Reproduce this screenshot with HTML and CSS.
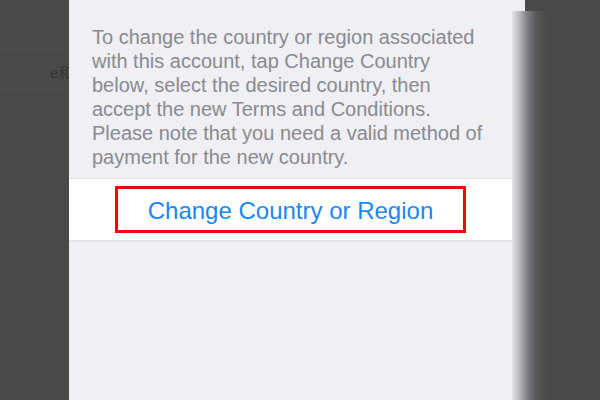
FILE: index.html
```html
<!DOCTYPE html>
<html>
<head>
<meta charset="utf-8">
<link rel="stylesheet" href="styles.css">
</head>
<body>
<div class="screen">
  <div class="backdrop">
    <div class="faint-line l1"></div>
    <div class="ghost">e和</div>
    <div class="faint-line l2"></div>
  </div>
  <div class="panel">
    <p class="note">To change the country or region associated<br>with this account, tap Change Country<br>below, select the desired country, then<br>accept the new Terms and Conditions.<br>Please note that you need a valid method of<br>payment for the new country.</p>
    <div class="band">
      <div class="highlight"><span class="action">Change Country or Region</span></div>
    </div>
  </div>
  <div class="edge-shadow"></div>
</div>
</body>
</html>
```
FILE: styles.css
```css
html, body {
  margin: 0;
  padding: 0;
}
body {
  background: #494949;
  font-family: "Liberation Sans", Arial, sans-serif;
}
.screen {
  position: relative;
  width: 600px;
  height: 400px;
  display: flex;
  overflow: hidden;
}
.backdrop {
  width: 69px;
  flex: none;
  display: flex;
  flex-direction: column;
  align-items: flex-start;
  overflow: hidden;
}
.faint-line {
  width: 69px;
  height: 1px;
  background: #4d4d4d;
}
.l1 { margin-top: 48px; }
.ghost {
  margin-top: 13px;
  margin-left: 50px;
  height: 26px;
  font-family: "Liberation Sans", "Noto Sans CJK SC", sans-serif;
  font-size: 15px;
  line-height: 22px;
  color: #333;
  white-space: nowrap;
}
.panel {
  width: 456px;
  flex: none;
  background: #efeff4;
  display: flex;
  flex-direction: column;
}
.note {
  margin: 0;
  width: 443px;
  box-sizing: border-box;
  padding: 25px 0 0 23px;
  font-size: 20px;
  line-height: 24px;
  color: #8a8a8f;
  height: 178px;
  white-space: nowrap;
  overflow: hidden;
}
.band {
  width: 443px;
  height: 61px;
  background: #fff;
  border-top: 1px solid #e0e0e4;
  border-bottom: 2px solid #e2e2e6;
  display: flex;
  justify-content: center;
  align-items: center;
}
.highlight {
  width: 345px;
  height: 41px;
  border: 3px solid #f2070b;
  display: flex;
  align-items: center;
  justify-content: center;
}
.action {
  font-size: 24px;
  color: #1c87f2;
  margin-top: 2px;
}
.edge-shadow {
  position: absolute;
  left: 512px;
  top: 11px;
  width: 40px;
  bottom: 0;
  background: linear-gradient(to right, #e6e6ea 0px, #b5b5b8 8px, #7c7c7e 16px, #58585a 24px, #4a4a4a 34px, #494949 40px);
}
```
